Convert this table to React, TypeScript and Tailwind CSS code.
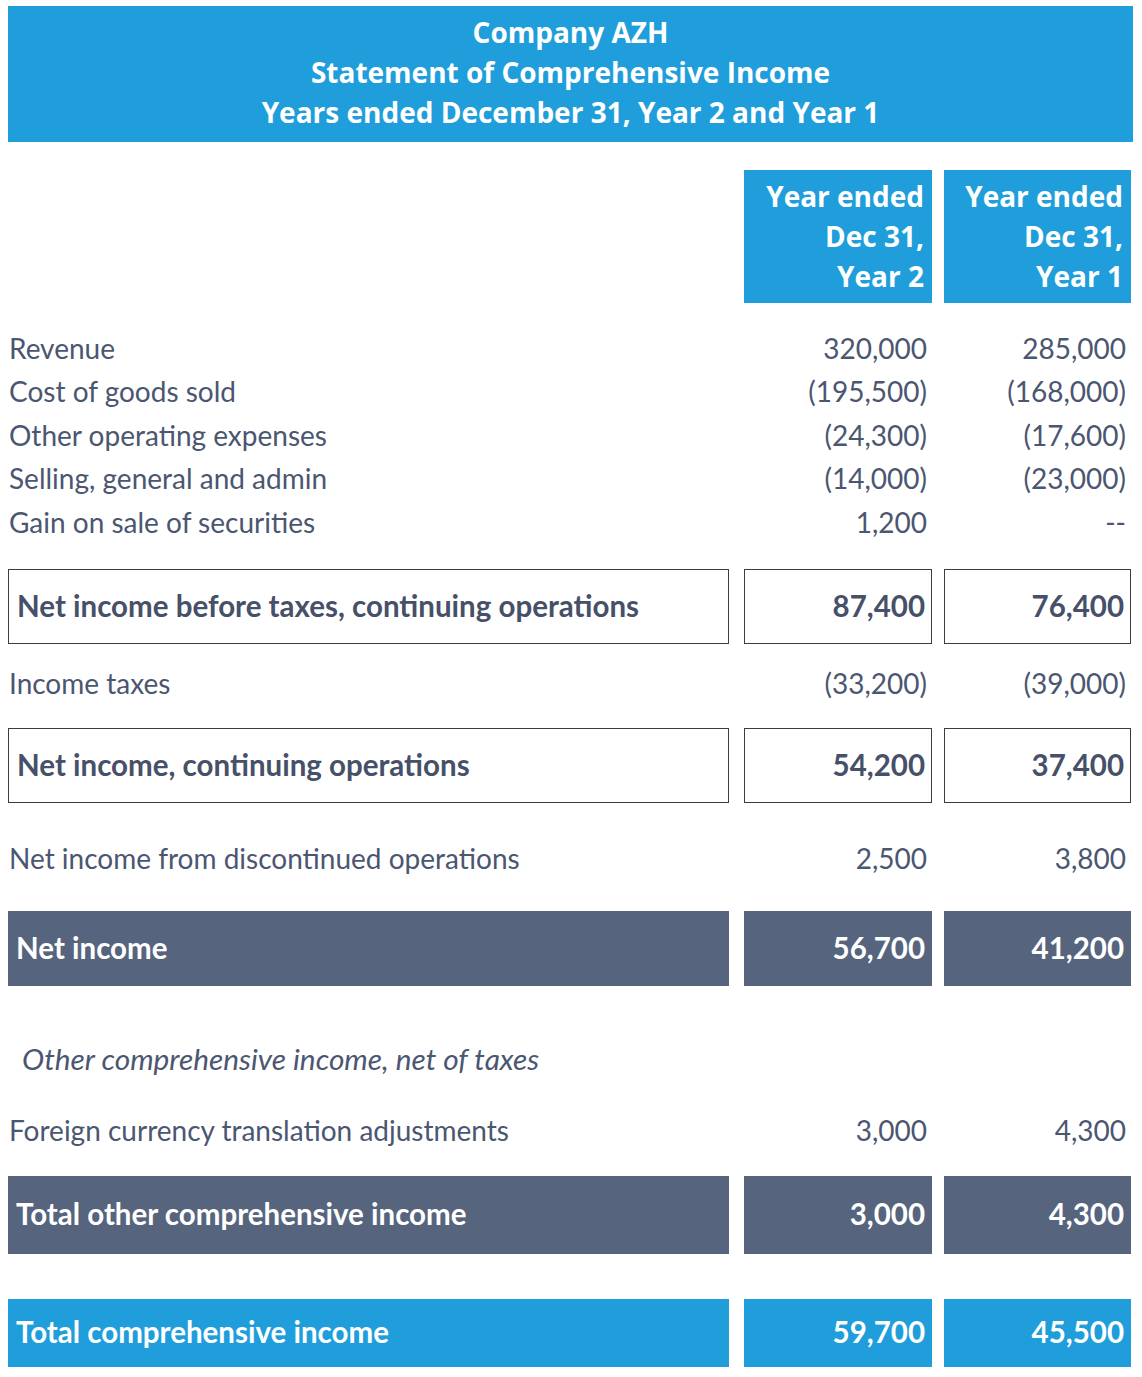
const font = { fontFamily: "Lato, 'Open Sans', sans-serif" };
const head = { fontFamily: "'Open Sans', Lato, sans-serif" };

type Row = { label: string; y2: string; y1: string };

const lines: Row[] = [
  { label: "Revenue", y2: "320,000", y1: "285,000" },
  { label: "Cost of goods sold", y2: "(195,500)", y1: "(168,000)" },
  { label: "Other operating expenses", y2: "(24,300)", y1: "(17,600)" },
  { label: "Selling, general and admin", y2: "(14,000)", y1: "(23,000)" },
  { label: "Gain on sale of securities", y2: "1,200", y1: "--" },
];

// label column, then the two year columns
const c1 = "w-[721px]";
const c2 = "ml-[15px] w-[188px]";
const c3 = "ml-[12px] w-[187px]";

function Plain({ row, className = "" }: { row: Row; className?: string }) {
  return (
    <div className={`flex h-[43.5px] items-center text-[28px] text-[#4b5671] ${className}`}>
      <div className={`${c1} pl-px`}>{row.label}</div>
      <div className={`${c2} pr-[5px] text-right`}>{row.y2}</div>
      <div className={`${c3} pr-[5px] text-right`}>{row.y1}</div>
    </div>
  );
}

function Boxed({ row, className = "" }: { row: Row; className?: string }) {
  const box = "flex h-[75px] items-center border-[1.5px] border-[#3a3d45] text-[29.5px] font-bold text-[#465068]";
  return (
    <div className={`flex ${className}`}>
      <div className={`${box} ${c1} pl-[8px]`}>{row.label}</div>
      <div className={`${box} ${c2} justify-end pr-[6px]`}>{row.y2}</div>
      <div className={`${box} ${c3} justify-end pr-[6px]`}>{row.y1}</div>
    </div>
  );
}

function Filled({ row, bg, h, className = "" }: { row: Row; bg: string; h: string; className?: string }) {
  const box = `flex ${h} ${bg} items-center text-[29.5px] font-bold text-white`;
  return (
    <div className={`flex ${className}`}>
      <div className={`${box} ${c1} pl-[8px]`}>{row.label}</div>
      <div className={`${box} ${c2} justify-end pr-[7px]`}>{row.y2}</div>
      <div className={`${box} ${c3} justify-end pr-[7px]`}>{row.y1}</div>
    </div>
  );
}

export default function App() {
  return (
    <div className="min-h-[1377px] w-[1142px] bg-white px-[8px] pt-[6px]" style={font}>
      <div
        className="w-[1125px] bg-[#1f9edb] pb-[10px] pt-[6px] text-center text-[28px] font-bold leading-[40px] text-white"
        style={head}
      >
        <div>Company AZH</div>
        <div>Statement of Comprehensive Income</div>
        <div>Years ended December 31, Year 2 and Year 1</div>
      </div>

      <div className="mt-[28px] flex text-[28px] font-bold leading-[40px] text-white" style={head}>
        <div className={c1} />
        <div className={`${c2} h-[133px] bg-[#1f9edb] pr-[8px] pt-[6px] text-right`}>
          Year ended
          <br />
          Dec 31,
          <br />
          Year 2
        </div>
        <div className={`${c3} h-[133px] bg-[#1f9edb] pr-[8px] pt-[6px] text-right`}>
          Year ended
          <br />
          Dec 31,
          <br />
          Year 1
        </div>
      </div>

      <div className="mt-[23px]">
        {lines.map((r) => (
          <Plain key={r.label} row={r} />
        ))}
      </div>

      <Boxed className="mt-[25.5px]" row={{ label: "Net income before taxes, continuing operations", y2: "87,400", y1: "76,400" }} />
      <Plain className="mt-[17px]" row={{ label: "Income taxes", y2: "(33,200)", y1: "(39,000)" }} />
      <Boxed className="mt-[23px]" row={{ label: "Net income, continuing operations", y2: "54,200", y1: "37,400" }} />
      <Plain className="mt-[34px]" row={{ label: "Net income from discontinued operations", y2: "2,500", y1: "3,800" }} />
      <Filled className="mt-[31px]" bg="bg-[#56647e]" h="h-[75px]" row={{ label: "Net income", y2: "56,700", y1: "41,200" }} />

      <div className="mt-[51px] flex h-[44px] items-center pl-[14px] text-[29.8px] italic text-[#4b5671]">
        Other comprehensive income, net of taxes
      </div>
      <Plain className="mt-[27px]" row={{ label: "Foreign currency translation adjustments", y2: "3,000", y1: "4,300" }} />
      <Filled className="mt-[24px]" bg="bg-[#56647e]" h="h-[78px]" row={{ label: "Total other comprehensive income", y2: "3,000", y1: "4,300" }} />
      <Filled className="mt-[45px]" bg="bg-[#1f9edb]" h="h-[68px]" row={{ label: "Total comprehensive income", y2: "59,700", y1: "45,500" }} />
    </div>
  );
}
